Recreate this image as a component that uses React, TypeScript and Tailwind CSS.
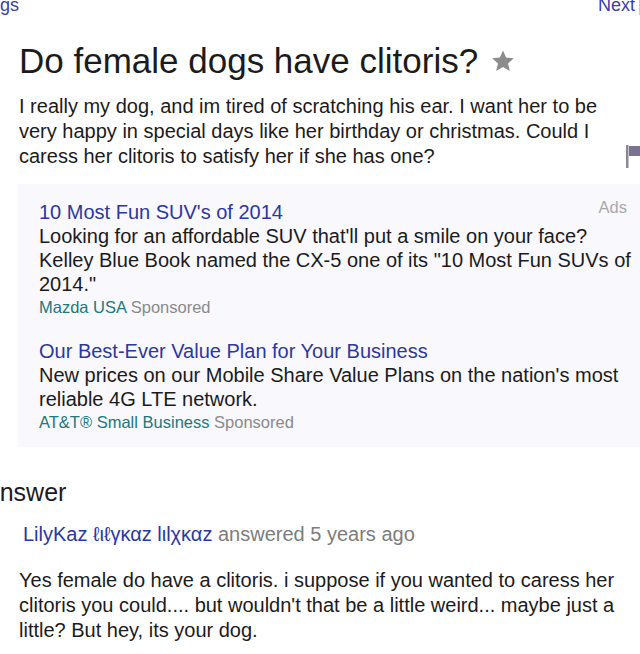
import React from "react";

const font = { fontFamily: '"Liberation Sans", Arial, sans-serif' };

function Star() {
  return (
    <svg width="24" height="24" viewBox="0 0 24 24" className="shrink-0">
      <path
        d="M12 1.5l3.1 7.1 7.7.7-5.8 5.1 1.8 7.6L12 18l-6.8 4 1.8-7.6L1.2 9.3l7.7-.7z"
        fill="#8c8c8c"
      />
    </svg>
  );
}

function Flag() {
  return (
    <svg width="14" height="23" viewBox="0 0 14 23" className="shrink-0">
      <rect x="0" y="0" width="2.5" height="23" fill="#8a8799" />
      <path d="M3 1h11v10H3z" fill="#7a7391" />
    </svg>
  );
}

function Ad({
  title,
  body,
  source,
}: {
  title: string;
  body: React.ReactNode;
  source: string;
}) {
  return (
    <div className="flex flex-col">
      <div className="text-[20px] leading-[24px] text-[#2b389e]">{title}</div>
      <div className="text-[20px] leading-[24px] text-[#1b1b1b]">{body}</div>
      <div className="mt-[1px] text-[16.5px] leading-[20px]">
        <span className="text-[#20797a]">{source}</span>{" "}
        <span className="text-[#8a8a8a]">Sponsored</span>
      </div>
    </div>
  );
}

export default function App() {
  return (
    <main style={font} className="w-[640px] h-[654px] overflow-hidden bg-white text-[#1b1b1b]">
      {/* top nav, cut off by the crop */}
      <div className="-mt-[5px] flex justify-between text-[18px] leading-[20px] text-[#3a40a6]">
        <span>gs</span>
        <div className="flex items-start gap-[4px]">
          <span>Next</span>
          <span className="mt-[4px] h-[16px] w-[1px] bg-[#c8c8d4]" />
        </div>
      </div>

      {/* question */}
      <div className="mt-[25px] pl-[19px] flex items-center gap-[13px]">
        <h1 className="text-[35px] leading-[42px] font-normal">
          Do female dogs have clitoris?
        </h1>
        <Star />
      </div>

      <div className="mt-[11.5px] pl-[19px] flex items-end justify-between">
        <p className="w-[600px] text-[20px] leading-[25px]">
          I really my dog, and im tired of scratching his ear. I want her to be
          very happy in special days like her birthday or christmas. Could I
          caress her clitoris to satisfy her if she has one?
        </p>
        <div className="mb-[1px]">
          <Flag />
        </div>
      </div>

      {/* ads */}
      <section className="mt-[15.5px] ml-[18px] bg-[#f8f8fd] pl-[21px] pr-[3px] pt-[16px] pb-[15px] flex flex-col gap-[22px]">
        <div className="relative">
          <span className="absolute right-[10px] -top-[3px] text-[16.5px] leading-[20px] text-[#a8a8a8]">
            Ads
          </span>
          <Ad
            title="10 Most Fun SUV's of 2014"
            source="Mazda USA"
            body={
              <>
                Looking for an affordable SUV that'll put a smile on your face?
                Kelley Blue Book named the CX-5 one of its "10 Most Fun SUVs of
                2014."
              </>
            }
          />
        </div>
        <Ad
          title="Our Best-Ever Value Plan for Your Business"
          source="AT&T® Small Business"
          body={
            <>
              New prices on our Mobile Share Value Plans on the nation's most
              reliable 4G LTE network.
            </>
          }
        />
      </section>

      {/* answer */}
      <h2 className="mt-[30px] -ml-[17px] text-[25px] leading-[30px] font-normal">
        Answer
      </h2>
      <div className="mt-[15px] pl-[23px] text-[20px] leading-[24px]">
        <span className="text-[#2b389e]">LilyKaz ℓιℓγκαz lιlχκαz</span>{" "}
        <span className="text-[#7c7c7c]">answered 5 years ago</span>
      </div>
      <p className="mt-[21.5px] pl-[19px] pr-[14px] text-[20px] leading-[25px]">
        Yes female do have a clitoris. i suppose if you wanted to caress her
        clitoris you could.... but wouldn't that be a little weird... maybe just
        a little? But hey, its your dog.
      </p>
    </main>
  );
}
